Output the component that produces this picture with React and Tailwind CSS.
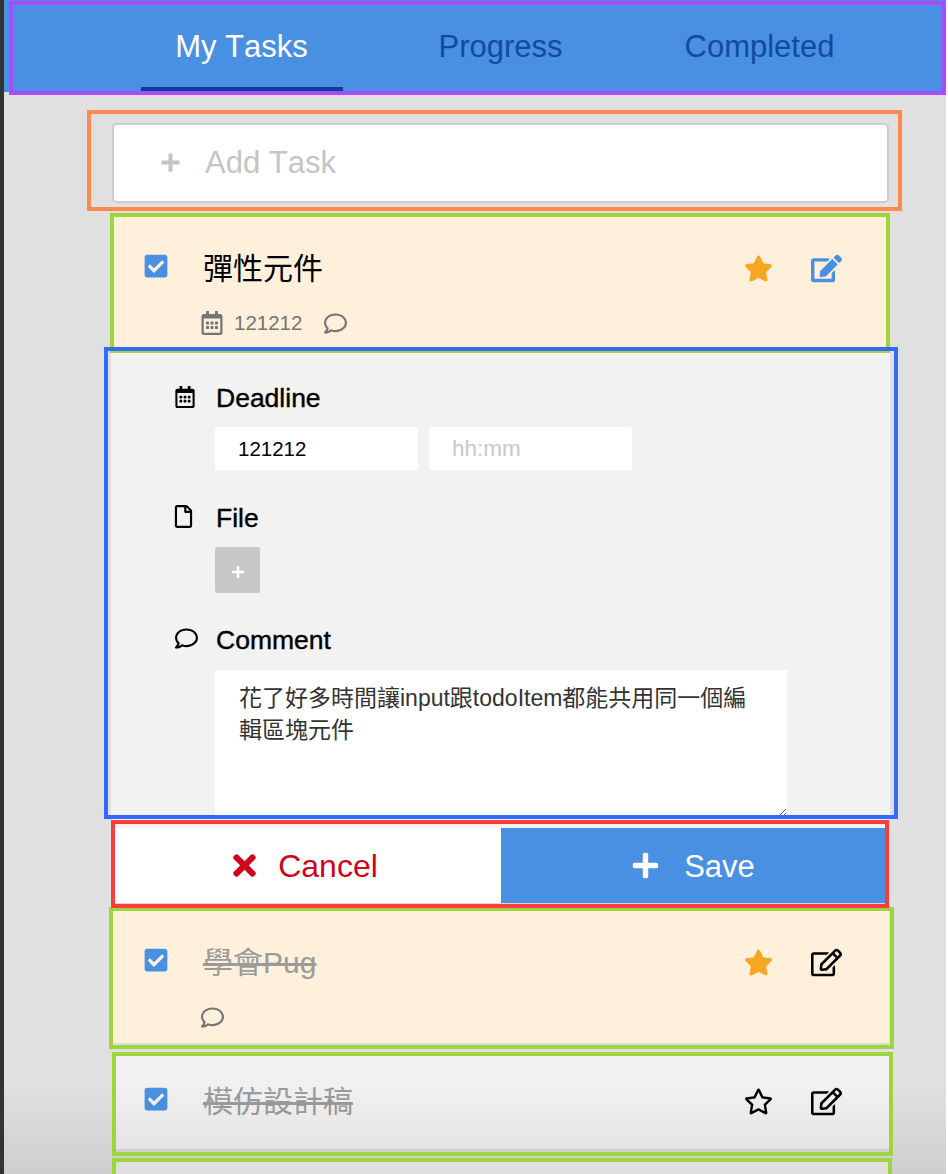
import React from 'react';
import { FaCheckSquare, FaEdit, FaRegCalendarAlt, FaRegComment, FaRegEdit, FaRegFile, FaRegStar, FaStar, FaPlus, FaTimes } from 'react-icons/fa';

const FONT = "font-['Liberation_Sans','Noto_Sans_CJK_TC',sans-serif] [font-kerning:none]";

const Tab = ({ label, active }) => (
  <div className="relative flex-1 flex justify-center pt-[27px]">
    <span className={`text-[31px] leading-[40px] ${active ? 'text-white' : 'text-[#0f4c9c]'}`}>{label}</span>
    {active && <div className="absolute bottom-[1px] left-[29px] w-[202px] h-[4px] bg-[#0a4096]"></div>}
  </div>
);

const Task = ({ title, done, starred, cream, blueEdit, date, comment, className }) => (
  <div className={`pt-[31px] pl-[33px] pr-[47px] border-b-2 border-[#dcdcdc] ${cream ? 'bg-[#fff0dc]' : 'bg-[#f1f1f1]'} ${className}`}>
    <div className="flex items-center h-[36px]">
      <FaCheckSquare size={26} className="text-[#4a90e2] -ml-[2px] -mt-[5px] shrink-0" />
      <span className={`ml-[34px] pt-[2px] text-[30px] leading-[36px] ${done ? 'text-[#9b9b9b] line-through' : 'text-black'}`}>{title}</span>
      <div className="ml-auto flex items-center gap-[38px]">
        {starred ? <FaStar size={29} className="text-[#f5a623]" /> : <FaRegStar size={29} className="text-black" />}
        {blueEdit ? <FaEdit size={31} className="text-[#4a90e2]" /> : <FaRegEdit size={31} className="text-black" />}
      </div>
    </div>
    {(date || comment) && (
      <div className="flex items-center h-[24px] mt-[25px] ml-[56px] text-[#757575]">
        {date && <FaRegCalendarAlt size={24} className="-ml-[1px] shrink-0" />}
        {date && <span className="ml-[10px] mr-[22px] text-[20.5px] leading-[24px]">{date}</span>}
        {comment && <FaRegComment size={23} className="shrink-0" />}
      </div>
    )}
  </div>
);

const Label = ({ icon, text, iconClass }) => (
  <div className="flex items-center h-[30px]">
    <div className={`w-[42px] shrink-0 ${iconClass}`}>{icon}</div>
    <span className="text-[26.5px] leading-[30px] text-black [-webkit-text-stroke:0.4px_black]">{text}</span>
  </div>
);

const Frame = ({ className }) => <div className={`absolute border-4 pointer-events-none ${className}`}></div>;

export default function App() {
  return (
    <div className={`relative h-[1174px] overflow-hidden flex bg-[#e0e0e0] ${FONT}`}>
      <div className="w-[4px] shrink-0 bg-[#333333]"></div>

      <div className="w-[942px] shrink-0">
        <div className="h-[92px] bg-[#4a90e2] pl-[108px]">
          <div className="flex w-[777px] h-full">
            <Tab label="My Tasks" active />
            <Tab label="Progress" />
            <Tab label="Completed" />
          </div>
        </div>

        <div className="ml-[108px] w-[777px]">
          <div className="mt-[31px] h-[80px] flex items-center pl-[46px] bg-white border-2 border-[#cccccc] rounded-[5px]">
            <FaPlus size={21} className="text-[#c4c4c4] -mt-[2px]" />
            <span className="ml-[24px] text-[31px] text-[#c4c4c4]">Add Task</span>
          </div>

          <Task title="彈性元件" starred cream blueEdit date="121212" comment className="mt-[13px] h-[134px] pt-[34px] border-b-0" />

          <div className="-mx-px h-[467px] bg-[#f2f2f2] pt-[33px] pl-[63px]">
            <Label text="Deadline" iconClass="pb-[2px]" icon={<FaRegCalendarAlt size={22} className="text-black" />} />
            <div className="mt-[14px] ml-[41px] flex gap-[11px]">
              <input readOnly value="121212" className="w-[203px] h-[43px] pl-[23px] bg-white rounded-[2px] text-[20.5px] text-black outline-none" />
              <input readOnly placeholder="hh:mm" className="w-[203px] h-[43px] pl-[23px] bg-white rounded-[2px] text-[22.5px] outline-none placeholder:text-[#c8c8c8]" />
            </div>
            <div className="mt-[33px]">
              <Label text="File" iconClass="pb-[4px]" icon={<FaRegFile size={23} className="text-black -ml-[2px]" />} />
            </div>
            <div className="mt-[14px] ml-[41px] w-[45px] h-[46px] flex items-center justify-center bg-[#c8c8c8] rounded-[2px]">
              <FaPlus size={14} className="text-white mt-[3px]" />
            </div>
            <div className="mt-[32px]">
              <Label text="Comment" iconClass="pb-[4px]" icon={<FaRegComment size={23} className="text-black ml-[1px]" />} />
            </div>
            <textarea
              readOnly
              value="花了好多時間讓input跟todoItem都能共用同一個編輯區塊元件"
              className="block mt-[15px] ml-[41px] w-[572px] h-[147px] px-[24px] py-[12px] bg-white text-[23px] leading-[32px] text-[#333333] outline-none"
            />
          </div>

          <div className="h-[88px] pt-[11px] bg-[#f2f2f2] border-b-2 border-[#d8d8d8] flex">
            <div className="w-[389px] h-[75px] bg-white flex items-center justify-center gap-[17px] pr-[7px] text-[#d0021b]">
              <FaTimes size={33} />
              <span className="text-[32px]">Cancel</span>
            </div>
            <div className="w-[385px] h-[75px] bg-[#4a90e2] flex items-center justify-center gap-[24px] pr-[1px] text-white">
              <FaPlus size={29} />
              <span className="pt-[3px] text-[31px]">Save</span>
            </div>
          </div>

          <Task title="學會Pug" done starred cream comment className="mt-[5px] h-[135px] pt-[34px]" />
          <Task title="模仿設計稿" done className="mt-[7px] h-[99px]" />
          <div className="mt-[7px] h-[20px] bg-[#f1f1f1]"></div>
        </div>
      </div>

      <div className="w-[2px] shrink-0 bg-white"></div>

      {/* darkening along the bottom of the capture */}
      <div className="absolute left-[4px] right-[2px] top-[1085px] h-[89px] bg-gradient-to-b from-transparent to-black/[0.08] pointer-events-none"></div>

      {/* coloured annotation boxes drawn over the page */}
      <Frame className="left-[9px] top-[1px] w-[937px] h-[94px] border-[#a84bff]" />
      <Frame className="left-[87px] top-[110px] w-[815px] h-[101px] border-[#ff8a4d]" />
      <Frame className="left-[110px] top-[213px] w-[780px] h-[140px] border-[#9fd53c]" />
      <Frame className="left-[109px] top-[907px] w-[785px] h-[142px] border-[#9fd53c]" />
      <Frame className="left-[112px] top-[1052px] w-[781px] h-[104px] border-[#9fd53c]" />
      <Frame className="left-[112px] top-[1158px] w-[780px] h-[40px] border-[#9fd53c]" />
      <Frame className="left-[104px] top-[347px] w-[794px] h-[472px] border-[#2f6bff]" />
      <Frame className="left-[111px] top-[820px] w-[778px] h-[88px] border-[#ff3b3b]" />
    </div>
  );
}
